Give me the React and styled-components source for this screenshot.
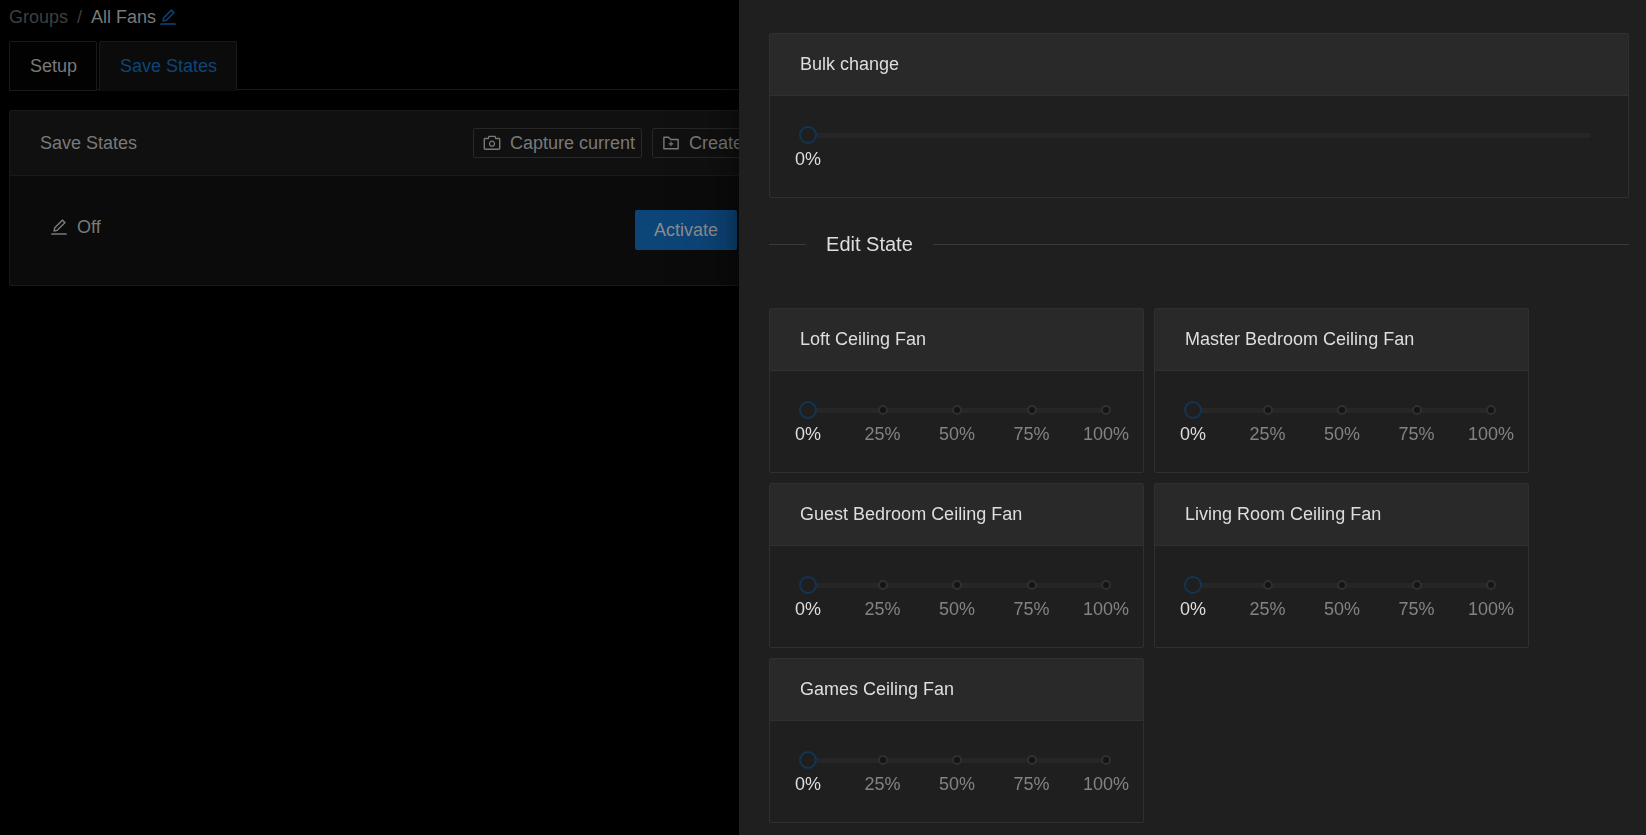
import React, { useId, useState } from "react";
import styled, { createGlobalStyle } from "styled-components";
import { AiOutlineCamera, AiOutlineEdit, AiOutlineFolderAdd } from "react-icons/ai";

const GlobalStyle = createGlobalStyle`
  *, *::before, *::after { box-sizing: border-box; }
  html, body { margin: 0; background: #000; }
  body {
    overflow: hidden;
    font-family: "Liberation Sans", Arial, sans-serif;
    font-size: 18px;
    line-height: 28px;
    color: #797979;
  }
  button { font: inherit; cursor: pointer; }
  button svg { display: block; flex: none; }
`;

const Page = styled.main`
  min-height: 100vh;
  padding: 3px 9px;
`;

const Breadcrumb = styled.nav`
  display: flex;
  align-items: center;
  height: 28px;

  a {
    color: #3f3f3f;
    text-decoration: none;
  }
`;

const Separator = styled.span`
  margin: 0 9px;
  color: #3f3f3f;
`;

const IconButton = styled.button`
  display: flex;
  padding: 0;
  border: 0;
  background: none;
  color: ${({ $accent }) => ($accent ? "#0d4579" : "inherit")};
`;

const Crumb = styled.span`
  display: flex;
  align-items: center;
  gap: 2px;
`;

const Tabs = styled.div`
  display: flex;
  gap: 2px;
  height: 49px;
  margin: 10px 0 20px;
  box-shadow: inset 0 -1px #1a1a1a;
`;

const Tab = styled.button`
  height: 50px;
  padding: 0 19px 0 20px;
  border: 1px solid #1a1a1a;
  border-bottom-color: ${({ $active }) => ($active ? "#0b0b0b" : "#1a1a1a")};
  border-radius: 2px 2px 0 0;
  background: ${({ $active }) => ($active ? "#0b0b0b" : "#020202")};
  color: ${({ $active }) => ($active ? "#0d4579" : "#797979")};
`;

const StatesCard = styled.section`
  width: 50%;
  border: 1px solid #1a1a1a;
  border-radius: 2px;
  background: #0b0b0b;
`;

const StatesHeader = styled.header`
  display: flex;
  align-items: center;
  justify-content: space-between;
  height: 65px;
  padding: 0 30px;
  border-bottom: 1px solid #1a1a1a;
  background: #101010;
`;

const CardTitle = styled.h2`
  margin: 0;
  font-size: 18px;
  font-weight: 400;
`;

const Actions = styled.div`
  display: flex;
  gap: 10px;
`;

const SmallButton = styled.button`
  display: flex;
  align-items: center;
  gap: 8px;
  width: ${({ $wide }) => ($wide ? "169px" : "140px")};
  height: 30px;
  padding: 0 6px 0 8px;
  border: 1px solid #272727;
  border-radius: 2px;
  background: transparent;
  color: #797979;
  white-space: nowrap;
`;

const StateRow = styled.div`
  display: flex;
  align-items: center;
  justify-content: space-between;
  padding: 34px 85px 35px 39px;
`;

const StateName = styled.div`
  display: flex;
  align-items: center;
  gap: 8px;
  padding-bottom: 6px;
`;

const PrimaryButton = styled.button`
  height: 40px;
  padding: 0 19px;
  border: 0;
  border-radius: 2px;
  background: #0d4579;
  color: #8c8c8c;
`;

const Drawer = styled.aside`
  position: fixed;
  top: 0;
  right: 0;
  bottom: 0;
  width: 55.1%;
  padding: 33px 17px 0 30px;
  overflow: hidden;
  background: #1f1f1f;
  color: #dedede;
  box-shadow: -6px 0 16px -8px rgba(0, 0, 0, 0.32), -9px 0 28px rgba(0, 0, 0, 0.2),
    -12px 0 48px 16px rgba(0, 0, 0, 0.12);
`;

const LevelCard = styled.section`
  border: 1px solid #303030;
  border-radius: 2px;
`;

const LevelHeader = styled.header`
  padding: 16px 30px 17px;
  border-bottom: 1px solid #303030;
  background: #292929;
`;

const LevelBody = styled.div`
  padding: 30px 28px 24px 29px;
`;

const SliderArea = styled.div`
  display: grid;
  align-items: center;
  height: 18px;

  > * { grid-area: 1 / 1; }
`;

const Rail = styled.div`
  display: flex;
  justify-content: space-between;
  align-items: center;
  height: 5px;
  margin: 0 9px;
  border-radius: 2px;
  background: #262626;
`;

const Stop = styled.span`
  display: flex;
  justify-content: center;
  width: 0;

  &::before {
    content: "";
    flex: none;
    width: 10px;
    height: 10px;
    border: 2px solid #303030;
    border-radius: 50%;
    background: #141414;
  }
`;

const RangeInput = styled.input`
  appearance: none;
  width: 100%;
  height: 18px;
  margin: 0;
  background: transparent;
  cursor: pointer;

  &::-webkit-slider-thumb {
    appearance: none;
    width: 18px;
    height: 18px;
    border: 2px solid #153450;
    border-radius: 50%;
    background: #1f1f1f;
  }
`;

const Marks = styled.div`
  display: flex;
  justify-content: space-between;
  height: 28px;
  margin: 1px 9px 0;
`;

const Mark = styled.span`
  display: flex;
  justify-content: center;
  width: 0;
  color: ${({ $active }) => ($active ? "#dedede" : "#838383")};
`;

const Divider = styled.h2`
  display: flex;
  align-items: center;
  gap: 20px;
  margin: 32px 0 50px;
  font-size: 20px;
  font-weight: 400;

  &::before,
  &::after {
    content: "";
    height: 1px;
    background: #3a3a3a;
  }
  &::before { width: 37px; }
  &::after { flex: 1; }
`;

const FanGrid = styled.div`
  display: grid;
  grid-template-columns: repeat(auto-fill, 375px);
  gap: 10px;
`;

const FAN_LEVELS = [0, 25, 50, 75, 100];
const FANS = [
  "Loft Ceiling Fan",
  "Master Bedroom Ceiling Fan",
  "Guest Bedroom Ceiling Fan",
  "Living Room Ceiling Fan",
  "Games Ceiling Fan",
];

function LevelSlider({ title, levels }) {
  const id = useId();
  const [value, setValue] = useState(0);
  return (
    <LevelCard>
      <LevelHeader>
        <CardTitle as="label" htmlFor={id}>{title}</CardTitle>
      </LevelHeader>
      <LevelBody>
        <SliderArea>
          <Rail>
            {levels.length > 1 && levels.map((level) => <Stop key={level} />)}
          </Rail>
          <RangeInput
            id={id}
            type="range"
            min="0"
            max="100"
            step={levels.length > 1 ? 25 : 1}
            value={value}
            onChange={(e) => setValue(Number(e.target.value))}
          />
        </SliderArea>
        <Marks>
          {levels.map((level) => (
            <Mark key={level} $active={level <= value}>{level}%</Mark>
          ))}
        </Marks>
      </LevelBody>
    </LevelCard>
  );
}

export default function App() {
  return (
    <>
      <GlobalStyle />
      <Page>
        <Breadcrumb>
          <a href="#groups">Groups</a>
          <Separator>/</Separator>
          <Crumb>
            All Fans
            <IconButton $accent aria-label="Rename group">
              <AiOutlineEdit size={20} />
            </IconButton>
          </Crumb>
        </Breadcrumb>
        <Tabs role="tablist">
          <Tab role="tab">Setup</Tab>
          <Tab role="tab" aria-selected="true" $active>Save States</Tab>
        </Tabs>
        <StatesCard>
          <StatesHeader>
            <CardTitle>Save States</CardTitle>
            <Actions>
              <SmallButton $wide><AiOutlineCamera size={20} />Capture current</SmallButton>
              <SmallButton><AiOutlineFolderAdd size={20} />Create</SmallButton>
            </Actions>
          </StatesHeader>
          <StateRow>
            <StateName>
              <IconButton aria-label="Edit state"><AiOutlineEdit size={20} /></IconButton>
              Off
            </StateName>
            <PrimaryButton>Activate</PrimaryButton>
          </StateRow>
        </StatesCard>
      </Page>
      <Drawer>
        <LevelSlider title="Bulk change" levels={[0]} />
        <Divider>Edit State</Divider>
        <FanGrid>
          {FANS.map((fan) => (
            <LevelSlider key={fan} title={fan} levels={FAN_LEVELS} />
          ))}
        </FanGrid>
      </Drawer>
    </>
  );
}
